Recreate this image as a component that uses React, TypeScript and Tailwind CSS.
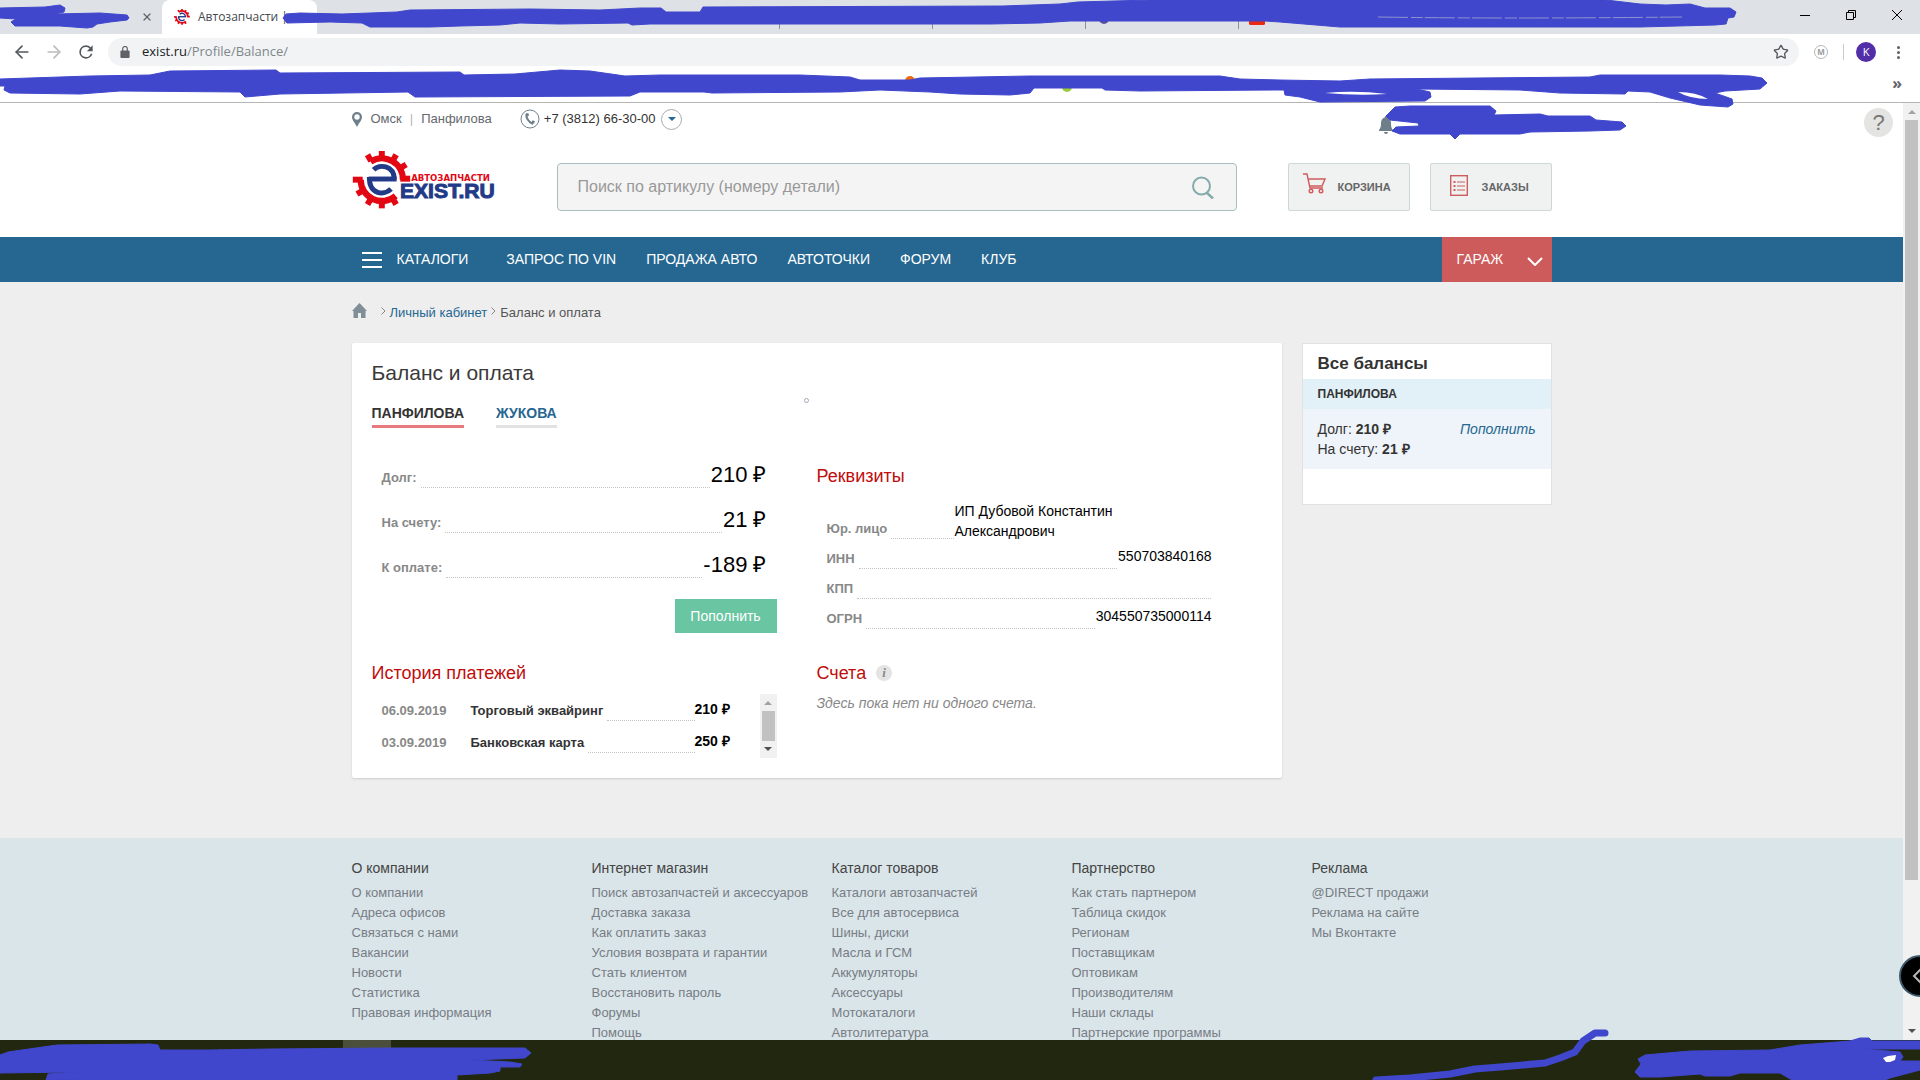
import { ArrowLeft, ArrowRight, Star, X } from "lucide-react";
import type { ReactNode } from "react";

const INK = "#4047cc";

const navLinks = ["ЗАПРОС ПО VIN", "ПРОДАЖА АВТО", "АВТОТОЧКИ", "ФОРУМ", "КЛУБ"];

const balances = [
    { label: "Долг:", value: "210 ₽" },
    { label: "На счету:", value: "21 ₽" },
    { label: "К оплате:", value: "-189 ₽" },
];

const payments = [
    { date: "06.09.2019", title: "Торговый эквайринг", sum: "210 ₽" },
    { date: "03.09.2019", title: "Банковская карта", sum: "250 ₽" },
];

const requisites = [
    { label: "ИНН", value: "550703840168" },
    { label: "КПП", value: "" },
    { label: "ОГРН", value: "304550735000114" },
];

const footerColumns = [
    {
        title: "О компании",
        links: ["О компании", "Адреса офисов", "Связаться с нами", "Вакансии", "Новости", "Статистика", "Правовая информация"],
    },
    {
        title: "Интернет магазин",
        links: [
            "Поиск автозапчастей и аксессуаров",
            "Доставка заказа",
            "Как оплатить заказ",
            "Условия возврата и гарантии",
            "Стать клиентом",
            "Восстановить пароль",
            "Форумы",
            "Помощь",
        ],
    },
    {
        title: "Каталог товаров",
        links: ["Каталоги автозапчастей", "Все для автосервиса", "Шины, диски", "Масла и ГСМ", "Аккумуляторы", "Аксессуары", "Мотокаталоги", "Автолитература"],
    },
    {
        title: "Партнерство",
        links: ["Как стать партнером", "Таблица скидок", "Регионам", "Поставщикам", "Оптовикам", "Производителям", "Наши склады", "Партнерские программы"],
    },
    { title: "Реклама", links: ["@DIRECT продажи", "Реклама на сайте", "Мы Вконтакте"] },
];

function Gear() {
    return (
        <g>
            <g fill="none" stroke="#e30613" strokeWidth="19">
                <path d="M90 65A64 64 0 0 1 188 120" />
                <path d="M60 120A64 64 0 0 0 166 169" />
            </g>
            <g fill="#e30613">
                {[-30, 0, 30, 58, 150, 180, 210, 240].map((a) => (
                    <rect key={a} x="115" y="33" width="18" height="22" transform={`rotate(${a} 124 120)`} />
                ))}
                <rect x="36" y="111" width="30" height="18" />
                <rect x="180" y="108" width="30" height="18" />
            </g>
            <g fill="none" stroke="#223a87" strokeWidth="15">
                <path d="M99 90C116 72 160 76 162 118" />
                <path d="M86 112C86 168 132 168 152 148" />
                <path d="M84 118H169" />
            </g>
        </g>
    );
}

function Logo() {
    return (
        <svg viewBox="36 33 432 176" className="h-[58px] w-36" role="img" aria-label="Exist.ru">
            <Gear />
            <text x="213" y="125" fontSize="26" fontWeight="700" fill="#e30613" fontFamily="DejaVu Sans">АВТОЗАПЧАСТИ</text>
            <text x="179" y="177" fontSize="64" fontWeight="700" fill="#223a87" stroke="#223a87" strokeWidth="3" fontFamily="Liberation Sans">EXIST.RU</text>
        </svg>
    );
}

function CartIcon() {
    return (
        <svg viewBox="0 0 23 21" className="h-[21px] w-[23px]" fill="none" stroke="#cf5c5c" strokeWidth="1.4">
            <path d="M0 1h4l3 14h13M5 6h17l-3 7H7" />
            <circle cx="8" cy="18" r="1.8" />
            <circle cx="18" cy="18" r="1.8" />
        </svg>
    );
}

function OrdersIcon() {
    return (
        <svg viewBox="0 0 18 21" className="h-[21px] w-[18px]" fill="none" stroke="#cf5c5c">
            <rect x=".7" y=".7" width="16.6" height="19.6" strokeWidth="1.4" />
            <path d="M7 7h8M7 11h8M7 15h8" strokeWidth="1.2" />
            <path d="M3.5 7h2M3.5 11h2M3.5 15h2" strokeWidth="2" />
        </svg>
    );
}

function TabStrip() {
    return (
        <div className="flex h-[34px] bg-[#dee1e6]">
            <div className="flex w-[162px] items-center justify-end pr-[9px]">
                <button aria-label="Закрыть вкладку"><X size={12} strokeWidth={2.5} color="#5f6368" /></button>
            </div>
            <div className="flex w-[155px] items-center gap-2 rounded-t-lg bg-white pl-3 text-[12px] text-[#45494d]">
                <svg viewBox="36 33 176 176" className="size-4"><Gear /></svg>
                <span>Автозапчасти |</span>
            </div>
            <div className="ml-[462px] flex items-center gap-[152px]">
                {[0, 1, 2, 3].map((i) => (
                    <span key={i} className="mt-1 h-5 w-px bg-[#8d9196]" />
                ))}
            </div>
            <div className="ml-auto flex">
                <button aria-label="Свернуть" className="flex w-[46px] items-center justify-center pb-1">
                    <span className="h-px w-[10px] bg-black" />
                </button>
                <button aria-label="Развернуть" className="flex w-[46px] items-center justify-center pb-1">
                    <svg viewBox="0 0 10 10" className="size-[10px]" fill="none" stroke="#000">
                        <path d="M.5 2.5h7v7h-7zM2.5 2.5v-2h7v7h-2" />
                    </svg>
                </button>
                <button aria-label="Закрыть" className="flex w-[46px] items-center justify-center pb-1">
                    <svg viewBox="0 0 10 10" className="size-[10px]" stroke="#000">
                        <path d="M0 0l10 10M10 0L0 10" />
                    </svg>
                </button>
            </div>
        </div>
    );
}

function Toolbar() {
    return (
        <div className="flex h-9 items-center bg-white pl-3">
            <div className="flex w-24 gap-3">
                <button aria-label="Назад"><ArrowLeft size={20} color="#54585c" /></button>
                <button aria-label="Вперёд"><ArrowRight size={20} color="#babcbe" /></button>
                <button aria-label="Обновить">
                    <svg viewBox="0 0 24 24" className="size-5" fill="#54585c">
                        <path d="M17.65 6.35A7.96 7.96 0 0 0 12 4a8 8 0 1 0 7.73 10h-2.08A6 6 0 1 1 12 6c1.66 0 3.14.69 4.22 1.78L13 11h7V4z" />
                    </svg>
                </button>
            </div>
            <div className="flex h-7 flex-1 items-center rounded-full bg-[#f1f3f4] pr-[10px] pl-3">
                <svg viewBox="0 0 10 13" className="h-3 w-[10px]" fill="#5f6368">
                    <path d="M1 5h8a1 1 0 0 1 1 1v6a1 1 0 0 1-1 1H1a1 1 0 0 1-1-1V6a1 1 0 0 1 1-1z" />
                    <path d="M2.5 6V3a2.5 2.5 0 0 1 5 0v3" fill="none" stroke="#5f6368" strokeWidth="1.3" />
                </svg>
                <span className="ml-3 text-[13px] text-[#80868b]"><span className="text-[#202124]">exist.ru</span>/Profile/Balance/</span>
                <button aria-label="Добавить в закладки" className="ml-auto"><Star size={16} color="#54585c" /></button>
            </div>
            <div className="flex w-[121px] items-center pl-[15px]">
                <span className="flex size-[14px] items-center justify-center rounded-full border border-[#b4b6b8] text-[8px] font-bold text-[#9a9c9e]">M</span>
                <span className="ml-[15px] h-4 w-px bg-[#c8cacc]" />
                <button className="ml-3 flex size-5 items-center justify-center rounded-full bg-[#512da8] text-[11px] text-white">K</button>
                <button aria-label="Меню" className="ml-[21px] flex flex-col gap-[2px]">
                    <span className="size-[3px] rounded-full bg-[#5f6368]" />
                    <span className="size-[3px] rounded-full bg-[#5f6368]" />
                    <span className="size-[3px] rounded-full bg-[#5f6368]" />
                </button>
            </div>
        </div>
    );
}

function Chrome() {
    return (
        <div className="shrink-0 border-b border-[#b5b5b5] font-['Open_Sans',sans-serif]">
            <TabStrip />
            <Toolbar />
            <div className="flex h-8 items-center justify-end bg-white pr-[18px] pb-[6px] text-[16px] font-bold text-[#5f6368]">»</div>
        </div>
    );
}

function TopBar() {
    return (
        <div className="flex h-8 items-center text-[13px] text-[#63696e]">
            <svg viewBox="0 0 10 15" className="h-[15px] w-[10px]" fill="#6f7f8a">
                <path fillRule="evenodd" d="M5 0a5 5 0 0 1 5 5c0 3-3 6-5 10C3 11 0 8 0 5a5 5 0 0 1 5-5zm0 2.3a2.7 2.7 0 1 0 0 5.4 2.7 2.7 0 0 0 0-5.4z" />
            </svg>
            <a href="#city" className="ml-[9px]">Омск</a>
            <span className="mx-2 text-[#b5b5b5]">|</span>
            <a href="#office">Панфилова</a>
            <svg viewBox="0 0 20 20" className="ml-7 size-5" fill="none" stroke="#6f7f8a">
                <circle cx="10" cy="10" r="9" />
                <path d="M7 4.5c-2 3 1.5 9 6 10.5" strokeWidth="2" />
                <path d="M7 4.5l1 2.5M12 12.5l2.5 1" strokeWidth="2.5" />
            </svg>
            <span className="ml-1 text-[#333]">+7 (3812) 66-30-00</span>
            <button aria-label="Другие телефоны" className="ml-[6px] flex size-[21px] items-center justify-center rounded-full border border-[#aaa]">
                <svg viewBox="0 0 8 4" className="h-1 w-2" fill="#256791"><path d="M0 0h8L4 4z" /></svg>
            </button>
            <svg viewBox="0 0 14 18" className="mt-3 mr-[159px] ml-auto h-[18px] w-[14px]" fill="#6f7f8a">
                <path d="M7 0c1 0 1.3.7 1.3 1.4C11 2.2 12 4.5 12 7c0 4 .6 5 2 7v1H0v-1c1.4-2 2-3 2-7 0-2.5 1-4.800 3.700-5.600C5.700.700 6 0 7 0zM5 16h4c0 2.600-4 2.600-4 0z" />
            </svg>
        </div>
    );
}

function Header() {
    return (
        <header className="mx-auto h-[134px] w-[1200px] max-w-full">
            <TopBar />
            <div className="mt-4 flex items-end">
                <a href="#home" className="pb-[2px]"><Logo /></a>
                <form className="ml-[61px] flex h-12 w-[680px] items-center rounded-sm border border-[#a9bfbf] bg-[#f4f4f4] pr-[22px] pl-5">
                    <input
                        aria-label="Поиск по артикулу"
                        placeholder="Поиск по артикулу (номеру детали)"
                        className="flex-1 bg-transparent text-[16px] outline-none placeholder:text-[#999]"
                    />
                    <button type="button" aria-label="Найти">
                        <svg viewBox="0 0 22 23" className="h-[23px] w-[22px]" fill="none" stroke="#86abab" strokeWidth="2">
                            <circle cx="9.5" cy="10" r="8.5" />
                            <path d="M14.5 16.5l6.5 6" strokeWidth="2.5" />
                        </svg>
                    </button>
                </form>
                <a href="#cart" className="ml-auto flex h-12 w-[122px] items-center rounded-xs border border-[#cdd7d7] bg-[#eff2f1] pl-[14px] text-[11px] font-bold text-[#666]">
                    <span className="mr-3 mb-2"><CartIcon /></span>
                    КОРЗИНА
                </a>
                <a href="#orders" className="ml-5 flex h-12 w-[122px] items-center rounded-xs border border-[#cdd7d7] bg-[#eff2f1] pl-[19px] text-[11px] font-bold text-[#666]">
                    <span className="mr-[14px] mb-1"><OrdersIcon /></span>
                    ЗАКАЗЫ
                </a>
            </div>
        </header>
    );
}

function NavBar() {
    return (
        <nav className="bg-[#256791] text-[14px] text-white">
            <div className="mx-auto flex h-[45px] w-[1200px] max-w-full items-center pl-[10px]">
                <button className="mr-[38px] flex items-center gap-[15px]">
                    <span className="flex flex-col gap-[5px]">
                        <span className="h-[2px] w-5 bg-white" />
                        <span className="h-[2px] w-5 bg-white" />
                        <span className="h-[2px] w-5 bg-white" />
                    </span>
                    КАТАЛОГИ
                </button>
                <div className="flex gap-[30px]">
                    {navLinks.map((link) => (
                        <a key={link} href="#nav">{link}</a>
                    ))}
                </div>
                <button className="ml-auto flex h-full w-[110px] items-center justify-between bg-[#ce5b5b] pr-[9px] pl-[15px]">
                    ГАРАЖ
                    <svg viewBox="0 0 16 9" className="mt-1 h-[9px] w-4" fill="none" stroke="#fff" strokeWidth="2"><path d="M1 1l7 7 7-7" /></svg>
                </button>
            </div>
        </nav>
    );
}

function Chevron() {
    return (
        <svg viewBox="0 0 5 8" className="mb-[3px] h-2 w-[5px]" fill="none" stroke="#888"><path d="M.5.5L4 4 .5 7.5" /></svg>
    );
}

function Breadcrumbs() {
    return (
        <div className="flex h-[61px] items-center text-[13px]">
            <a href="#home" aria-label="Главная">
                <svg viewBox="0 0 15 15" className="mb-1 h-[15px] w-[15px]" fill="#808e98">
                    <path d="M7.5 0L15 8h-1.5v7H9v-5H6v5H1.5V8H0z" />
                </svg>
            </a>
            <span className="ml-[14px]"><Chevron /></span>
            <a href="#cabinet" className="mx-1 text-[#256791]">Личный кабинет</a>
            <Chevron />
            <span className="ml-1 text-[#555]">Баланс и оплата</span>
        </div>
    );
}

function Leader() {
    return <span className="mr-px ml-1 flex-1 border-b border-dotted border-[#c4c4c4]" />;
}

function SectionTitle({ children }: { children: ReactNode }) {
    return <h2 className="flex items-center text-[18px] leading-6 text-[#c00d0d]">{children}</h2>;
}

function BalanceList() {
    return (
        <div>
            <dl className="px-[10px]">
                {balances.map((row) => (
                    <div key={row.label} className="mb-[21px] flex h-6">
                        <dt className="pt-1 text-[13px] font-bold text-[#888]">{row.label}</dt>
                        <Leader />
                        <dd className="text-[22px] leading-[22px] text-black">{row.value}</dd>
                    </div>
                ))}
            </dl>
            <button className="ml-auto block h-[34px] w-[102px] bg-[#6ac5a2] text-[14px] text-white">Пополнить</button>
        </div>
    );
}

function Requisites() {
    return (
        <div className="w-[395px]">
            <SectionTitle>Реквизиты</SectionTitle>
            <dl className="mt-[13px] pl-[10px] text-[14px] leading-5">
                <div className="flex h-[38px]">
                    <dt className="mt-[18px] text-[13px] font-bold text-[#888]">Юр. лицо</dt>
                    <Leader />
                    <dd className="w-[257px] pr-20 text-black">ИП Дубовой Константин Александрович</dd>
                </div>
                {requisites.map((row) => (
                    <div key={row.label} className="mt-[7px] flex h-[23px]">
                        <dt className="mt-[3px] text-[13px] font-bold text-[#888]">{row.label}</dt>
                        <Leader />
                        <dd className="text-black">{row.value}</dd>
                    </div>
                ))}
            </dl>
        </div>
    );
}

function History() {
    return (
        <div>
            <SectionTitle>История платежей</SectionTitle>
            <div className="mt-[9px] flex h-16 justify-between pl-[10px]">
                <table className="text-[13px] font-bold">
                    <tbody>
                        {payments.map((p) => (
                            <tr key={p.date} className="h-8">
                                <td className="w-[89px] pt-[2px] text-[#888]">{p.date}</td>
                                <td className="w-[224px] text-[#333]">
                                    <div className="flex h-[22px] items-center pt-[2px]">
                                        {p.title}
                                        <span className="ml-1 flex-1 self-stretch border-b border-dotted border-[#c4c4c4]" />
                                    </div>
                                </td>
                                <td className="pb-[2px] text-[14px] whitespace-nowrap text-black">{p.sum}</td>
                            </tr>
                        ))}
                    </tbody>
                </table>
                <div className="flex w-[17px] flex-col items-center bg-[#f1f1f1] pt-[7px]">
                    <svg viewBox="0 0 8 4" className="h-1 w-2" fill="#a3a3a3"><path d="M0 4h8L4 0z" /></svg>
                    <div className="mt-[6px] h-[30px] w-[13px] bg-[#c1c1c1]" />
                    <svg viewBox="0 0 8 4" className="mt-[6px] h-1 w-2" fill="#505050"><path d="M0 0h8L4 4z" /></svg>
                </div>
            </div>
        </div>
    );
}

function BalanceCard() {
    return (
        <main className="w-[930px] rounded-xs bg-white px-5 pt-[18px] pb-5 shadow-[0_1px_2px_#ccc]">
            <h1 className="text-[21px] leading-6 text-[#3a3a3a]">Баланс и оплата</h1>
            <div className="mt-4 flex gap-8 text-[14px] leading-6 font-bold">
                <a href="#panfilova" className="border-b-3 border-[#e7797d] text-[#333]">ПАНФИЛОВА</a>
                <a href="#zhukova" className="border-b-3 border-[#e2e2e2] text-[#256791]">ЖУКОВА</a>
                <span className="mt-[-3px] mr-[453px] ml-auto size-[5px] rounded-full border border-[#a5a5b8]" />
            </div>
            <div className="mt-9 grid grid-cols-[405px_1fr] gap-x-10">
                <BalanceList />
                <Requisites />
            </div>
            <div className="mt-7 grid grid-cols-[405px_1fr] gap-x-10">
                <History />
                <div>
                    <SectionTitle>
                        Счета
                        <span className="ml-[10px] flex size-4 items-center justify-center rounded-full bg-[#e4e4e4] font-['Liberation_Serif',serif] text-[13px] font-bold text-[#888] italic">i</span>
                    </SectionTitle>
                    <p className="mt-2 text-[14px] text-[#888] italic">Здесь пока нет ни одного счета.</p>
                </div>
            </div>
        </main>
    );
}

function Sidebar() {
    return (
        <aside className="w-[250px] border border-[#e1e1e1] bg-white pb-[35px] text-[14px] leading-5 text-[#333]">
            <h2 className="px-[15px] pt-2 pb-[3px] text-[17px] leading-6 font-bold">Все балансы</h2>
            <h3 className="h-[30px] bg-[#e2f0f7] px-[15px] text-[12px] leading-[30px] font-bold">ПАНФИЛОВА</h3>
            <div className="flex h-[60px] justify-between bg-[#eef4f9] px-[15px] pt-[10px]">
                <div>
                    <p>Долг: <b>210 ₽</b></p>
                    <p>На счету: <b>21 ₽</b></p>
                </div>
                <a href="#pay" className="text-[#256791] italic">Пополнить</a>
            </div>
        </aside>
    );
}

function Footer() {
    return (
        <footer className="flex-1 bg-[#dae5e9]">
            <div className="mx-auto grid w-[1200px] max-w-full grid-cols-5 pt-5">
                {footerColumns.map((col) => (
                    <div key={col.title} className="text-[13px] leading-5 whitespace-nowrap text-[#777c85]">
                        <h4 className="mb-[5px] text-[14px] text-[#444]">{col.title}</h4>
                        <ul>
                            {col.links.map((link) => (
                                <li key={link}><a href="#footer">{link}</a></li>
                            ))}
                        </ul>
                    </div>
                ))}
            </div>
        </footer>
    );
}

function PageScrollbar() {
    return (
        <div className="flex w-[17px] flex-col items-center bg-[#f1f1f1] py-[7px]">
            <svg viewBox="0 0 8 4" className="h-1 w-2 shrink-0" fill="#a3a3a3"><path d="M0 4h8L4 0z" /></svg>
            <div className="mt-[6px] mb-[149px] w-[13px] flex-1 bg-[#c1c1c1]" />
            <svg viewBox="0 0 8 4" className="h-1 w-2 shrink-0" fill="#505050"><path d="M0 0h8L4 4z" /></svg>
        </div>
    );
}

// freehand marker strokes drawn on top of everything
function Marker() {
    return (
        <svg viewBox="0 0 1920 1080" preserveAspectRatio="xMinYMin" className="pointer-events-none absolute inset-0 h-full w-full" aria-hidden="true">
            <circle cx="1104" cy="19" r="5" fill="#5a4fa0" />
            <path d="M1249 19h16v5q0 1-2 1h-12q-2 0-2-1z" fill="#ea2a10" />
            <circle cx="910" cy="81" r="5" fill="#f26a10" />
            <circle cx="1067" cy="87" r="5" fill="#9acd32" />
            <g fill={INK} stroke={INK} strokeWidth="1" strokeLinejoin="round">
                <path d="M0 8L45 7 60 5 65 8 64 12 55 14 100 13 127 15 129 18 127 20 110 22 97 24 93 27 87 28 60 26 15 26 11 22 16 19 0 18z" />
                <path d="M283 18L286 14 300 13 342 14 370 13 397 12 410 10 530 9 600 10 640 8 661 8 666 12 700 12 703 7 1003 6 1060 4 1078 2 1150 0H1606L1640 4 1666 5 1690 4 1705 8H1730L1736 12 1734 17 1728 18 1726 24 1715 25 1640 27H1340L1280 22 1265 21 1240 21 1070 21 1040 23 990 24H650L632 25 628 23 560 24 520 23 500 25 460 26 430 27H370L362 23 330 22 287 23z" />
                <path d="M0 79L90 76 150 75 170 71 276 70 280 73 460 72 464 75 515 74 560 70 590 71 625 76 660 75H800L850 77 860 80H910L920 78 1030 76H1165L1220 76 1240 79 1280 80 1340 81 1370 79 1590 77 1600 75 1660 75H1720L1750 76 1762 78 1767 83 1760 89 1725 91 1715 93 1732 99 1733 104 1728 107 1700 105 1670 98 1650 92 1628 91 1625 94 1560 93 1520 90 1417 89 1430 92 1431 97 1425 101 1320 102 1300 97 1285 95 1284 90H1275L1140 91 1105 90 1102 88H1034L1030 93 1010 95 960 94 930 92 880 90 840 92 712 93 704 92 640 92 630 96 415 97 408 92 280 94 245 97 240 92 120 91 80 94 10 93 4 90 5 86 0 86z" />
                <path d="M1386 116L1395 107 1410 106H1490L1496 111 1494 115 1540 114 1548 116 1590 116 1596 120 1622 122 1626 126 1620 130 1590 131 1530 132 1520 134 1460 134 1455 139 1450 134H1400L1392 131 1396 127 1419 126 1418 123 1390 120z" />
            </g>
            <path d="M1378 17Q1500 19 1682 17" fill="none" stroke="#8f93cf" strokeDasharray="30 3 12 2" />
            <path d="M1325 93q30-3 62 1q-30 2-62-1zM1678 92q18 0 30 7q-18 0-30-7z" fill="#fff" />
            <rect x="343" y="1040" width="48" height="10" fill="#4c4e3c" />
            <path d="M213 1052q7-5 14 0z" fill="#0a7ad0" />
            <g fill={INK} stroke={INK} strokeWidth="1" strokeLinejoin="round">
                <path d="M0 1055L8 1052 57 1045 150 1044 158 1045 160 1050 210 1050 270 1049 392 1048 525 1048 531 1053 525 1058 470 1060 510 1062 522 1064 520 1067 500 1067 500 1071 490 1073 457 1075V1080H46L48 1074 78 1072 0 1073z" />
                <path d="M1638 1059L1645 1055 1690 1051 1770 1050 1800 1045 1850 1041 1860 1038H1869L1872 1041H1920V1049H1862L1900 1052 1903 1057 1900 1061H1920V1070L1890 1078 1885 1080H1792L1780 1073H1740L1730 1076H1705L1700 1074 1660 1077H1640L1635 1072 1641 1064z" />
            </g>
            <path d="M1376 1080L1410 1078 1450 1074 1475 1069 1500 1067 1545 1063 1560 1058 1575 1052 1583 1041 1595 1033H1605" fill="none" stroke={INK} strokeWidth="7" strokeLinecap="round" strokeLinejoin="round" />
            <path d="M1883 1058l5-2 8-1-1 5-5 2h-4z" fill="#fff" />
            <circle cx="1920" cy="976" r="20" fill="#000" stroke="#3d5a6b" strokeWidth="2" />
            <path d="M1921 969l-7 7 7 7" fill="none" stroke="#b5b5b5" strokeWidth="2" />
        </svg>
    );
}

export default function App() {
    return (
        <div className="relative flex h-screen flex-col overflow-hidden font-['Liberation_Sans',Arial,sans-serif]">
            <Chrome />
            <div className="flex min-h-0 flex-1">
                <div className="relative flex flex-1 flex-col overflow-hidden bg-[#eee]">
                    <div className="bg-white"><Header /></div>
                    <NavBar />
                    <div className="mx-auto mb-[60px] w-[1200px] max-w-full">
                        <Breadcrumbs />
                        <div className="flex items-start justify-between">
                            <BalanceCard />
                            <Sidebar />
                        </div>
                    </div>
                    <Footer />
                    <button aria-label="Помощь" className="absolute top-[5px] right-[10px] size-[29px] rounded-full bg-[#e4e4e2] text-[22px] leading-[29px] text-[#777]">?</button>
                </div>
                <PageScrollbar />
            </div>
            <div className="h-10 shrink-0 bg-[#22280f]" />
            <Marker />
        </div>
    );
}
